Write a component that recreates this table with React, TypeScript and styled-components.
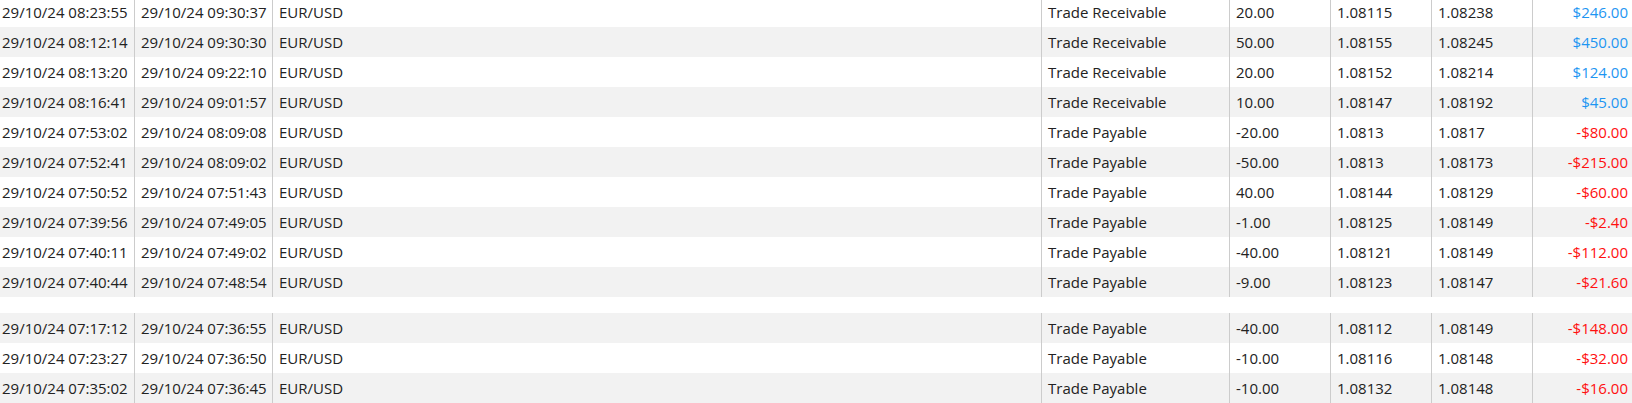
import styled, { createGlobalStyle } from 'styled-components';

const GlobalStyle = createGlobalStyle`
  html, body {
    margin: 0;
    padding: 0;
    background: #ffffff;
  }
  body {
    font-family: 'Open Sans', 'Noto Sans', sans-serif;
    overflow: hidden;
  }
`;

type Trade = {
  open: string;
  close: string;
  symbol: string;
  type: string;
  volume: string;
  openPrice: string;
  closePrice: string;
  profit: string;
};

const firstBlock: Trade[] = [
  { open: '29/10/24 08:23:55', close: '29/10/24 09:30:37', symbol: 'EUR/USD', type: 'Trade Receivable', volume: '20.00', openPrice: '1.08115', closePrice: '1.08238', profit: '$246.00' },
  { open: '29/10/24 08:12:14', close: '29/10/24 09:30:30', symbol: 'EUR/USD', type: 'Trade Receivable', volume: '50.00', openPrice: '1.08155', closePrice: '1.08245', profit: '$450.00' },
  { open: '29/10/24 08:13:20', close: '29/10/24 09:22:10', symbol: 'EUR/USD', type: 'Trade Receivable', volume: '20.00', openPrice: '1.08152', closePrice: '1.08214', profit: '$124.00' },
  { open: '29/10/24 08:16:41', close: '29/10/24 09:01:57', symbol: 'EUR/USD', type: 'Trade Receivable', volume: '10.00', openPrice: '1.08147', closePrice: '1.08192', profit: '$45.00' },
  { open: '29/10/24 07:53:02', close: '29/10/24 08:09:08', symbol: 'EUR/USD', type: 'Trade Payable', volume: '-20.00', openPrice: '1.0813', closePrice: '1.0817', profit: '-$80.00' },
  { open: '29/10/24 07:52:41', close: '29/10/24 08:09:02', symbol: 'EUR/USD', type: 'Trade Payable', volume: '-50.00', openPrice: '1.0813', closePrice: '1.08173', profit: '-$215.00' },
  { open: '29/10/24 07:50:52', close: '29/10/24 07:51:43', symbol: 'EUR/USD', type: 'Trade Payable', volume: '40.00', openPrice: '1.08144', closePrice: '1.08129', profit: '-$60.00' },
  { open: '29/10/24 07:39:56', close: '29/10/24 07:49:05', symbol: 'EUR/USD', type: 'Trade Payable', volume: '-1.00', openPrice: '1.08125', closePrice: '1.08149', profit: '-$2.40' },
  { open: '29/10/24 07:40:11', close: '29/10/24 07:49:02', symbol: 'EUR/USD', type: 'Trade Payable', volume: '-40.00', openPrice: '1.08121', closePrice: '1.08149', profit: '-$112.00' },
  { open: '29/10/24 07:40:44', close: '29/10/24 07:48:54', symbol: 'EUR/USD', type: 'Trade Payable', volume: '-9.00', openPrice: '1.08123', closePrice: '1.08147', profit: '-$21.60' },
];

const secondBlock: Trade[] = [
  { open: '29/10/24 07:17:12', close: '29/10/24 07:36:55', symbol: 'EUR/USD', type: 'Trade Payable', volume: '-40.00', openPrice: '1.08112', closePrice: '1.08149', profit: '-$148.00' },
  { open: '29/10/24 07:23:27', close: '29/10/24 07:36:50', symbol: 'EUR/USD', type: 'Trade Payable', volume: '-10.00', openPrice: '1.08116', closePrice: '1.08148', profit: '-$32.00' },
  { open: '29/10/24 07:35:02', close: '29/10/24 07:36:45', symbol: 'EUR/USD', type: 'Trade Payable', volume: '-10.00', openPrice: '1.08132', closePrice: '1.08148', profit: '-$16.00' },
];

const Page = styled.div`
  width: 1632px;
  height: 403px;
  overflow: hidden;
`;

const Sheet = styled.div`
  margin: -3px 0 0 -4px;
  width: 1638px;
  display: flex;
  flex-direction: column;
`;

const Block = styled.div`
  display: flex;
  flex-direction: column;
`;

const Gap = styled.div`
  height: 16px;
`;

const Row = styled.div<{ $shaded: boolean }>`
  display: grid;
  grid-template-columns: 139px 138px 769px 188px 101px 101px 101px 101px;
  height: 30px;
  background: ${(p) => (p.$shaded ? '#f2f2f2' : '#ffffff')};
`;

const Cell = styled.div<{ $align?: 'left' | 'right'; $last?: boolean }>`
  display: flex;
  align-items: center;
  justify-content: ${(p) => (p.$align === 'right' ? 'flex-end' : 'flex-start')};
  padding: 0 6px;
  font-size: 15px;
  color: #222222;
  white-space: nowrap;
  border-right: ${(p) => (p.$last ? 'none' : '1px solid #cccccc')};
`;

const Profit = styled(Cell)<{ $negative: boolean }>`
  color: ${(p) => (p.$negative ? '#ff1010' : '#1e96f2')};
`;

const TradeRow = ({ trade, shaded }: { trade: Trade; shaded: boolean }) => (
  <Row $shaded={shaded}>
    <Cell>{trade.open}</Cell>
    <Cell>{trade.close}</Cell>
    <Cell>{trade.symbol}</Cell>
    <Cell>{trade.type}</Cell>
    <Cell>{trade.volume}</Cell>
    <Cell>{trade.openPrice}</Cell>
    <Cell>{trade.closePrice}</Cell>
    <Profit $align="right" $last $negative={trade.profit.startsWith('-')}>
      {trade.profit}
    </Profit>
  </Row>
);

const App = () => {
  return (
    <Page>
      <GlobalStyle />
      <Sheet>
        <Block>
          {firstBlock.map((t, i) => (
            <TradeRow key={t.open} trade={t} shaded={i % 2 === 1} />
          ))}
        </Block>
        <Gap />
        <Block>
          {secondBlock.map((t, i) => (
            <TradeRow key={t.open} trade={t} shaded={i % 2 === 0} />
          ))}
        </Block>
      </Sheet>
    </Page>
  );
};

export default App;
